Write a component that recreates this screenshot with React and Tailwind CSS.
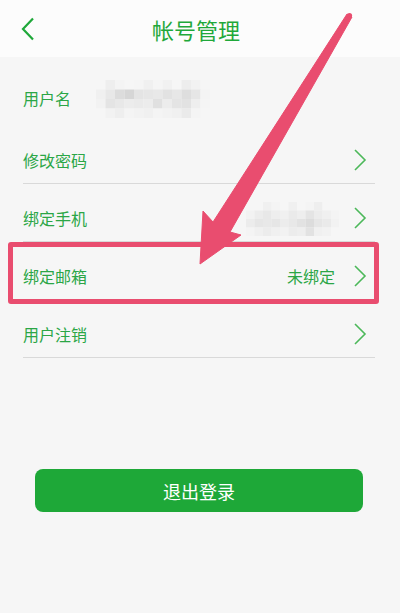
import React from "react";

const Chevron = () => (
  <svg width="14" height="22" viewBox="0 0 14 22" className="shrink-0">
    <path d="M2 1 L12 11 L2 21" fill="none" stroke="#4cb85a" strokeWidth="1.6" />
  </svg>
);

const Pixel = ({ cells, cols, size }) => (
  <svg width={cols * size} height={(cells.length / cols) * size} className="block">
    {cells.map((c, i) => (
      <rect
        key={i}
        x={(i % cols) * size}
        y={Math.floor(i / cols) * size}
        width={size}
        height={size}
        fill={`rgb(${c},${c},${c})`}
      />
    ))}
  </svg>
);

const nameCells = [
  246, 238, 244, 246, 245, 240, 245, 241, 246, 237, 242, 246,
  240, 232, 220, 214, 228, 230, 232, 226, 231, 222, 230, 244,
  242, 228, 232, 236, 234, 236, 224, 236, 228, 226, 238, 245,
  246, 242, 238, 244, 242, 240, 244, 242, 240, 234, 244, 246,
];
const phoneCells = [
  246, 246, 240, 244, 246, 240, 246, 244, 238, 246, 246,
  242, 236, 232, 238, 240, 234, 238, 228, 236, 240, 244,
  236, 230, 232, 230, 236, 232, 226, 220, 230, 234, 242,
  244, 240, 236, 240, 242, 236, 238, 226, 240, 242, 246,
];

const Row = ({ label, right, children, divider = true, mt }) => (
  <div className={`ml-[23px] mr-[25px] ${mt}`}>
    <div className="flex h-[51px] items-center pt-[5px] pr-[8px]">
      <span className="text-[16px] leading-[20px] text-[#2ba646]">{label}</span>
      <div className="flex-1">{children}</div>
      {right && (
        <span className="mr-[18px] text-[16px] leading-[20px] text-[#2ba646]">{right}</span>
      )}
      <Chevron />
    </div>
    <div className={`h-px ${divider ? "bg-[#d9d9d9]" : ""}`} />
  </div>
);

export default function App() {
  return (
    <div
      className="relative h-[613px] w-[400px] overflow-hidden bg-[#f6f6f6]"
      style={{ fontFamily: '"Noto Sans CJK SC", "Noto Sans", sans-serif' }}
    >
      <div className="relative flex h-[57px] items-center justify-center bg-[#fcfcfc]">
        <svg width="14" height="24" viewBox="0 0 14 24" className="absolute left-[21px] top-[17px]">
          <path d="M12 1.5 L2 12 L12 22.5" fill="none" stroke="#1fa83a" strokeWidth="2.2" />
        </svg>
        <span className="mr-[8px] text-[22px] leading-[28px] text-[#1fa83a]">帐号管理</span>
      </div>

      <div className="mx-[23px] mt-[13px] flex h-[51px] items-center pt-[5px]">
        <span className="text-[16px] leading-[20px] text-[#2ba646]">用户名</span>
        <div className="ml-[25px] mt-[2px]">
          <Pixel cells={nameCells} cols={12} size={9.5} />
        </div>
      </div>

      <Row label="修改密码" mt="mt-[11px]" />
      <Row label="绑定手机" mt="mt-[6px]">
        <div className="ml-auto mr-[14px] mt-[2px] w-fit">
          <Pixel cells={phoneCells} cols={11} size={8.5} />
        </div>
      </Row>
      <Row label="绑定邮箱" right="未绑定" mt="mt-[6px]" />
      <Row label="用户注销" mt="mt-[6px]" />

      <div className="ml-[35px] mr-[37px] mt-[111px] flex h-[43px] items-center justify-center rounded-[8px] bg-[#1ea838]">
        <span className="text-[18px] leading-[24px] text-white">退出登录</span>
      </div>

      {/* annotation box */}
      <div className="absolute left-[8px] top-[242px] h-[62px] w-[371px] rounded-[3px] border-[5px] border-[#e94d6f]" />

      {/* annotation arrow */}
      <svg className="absolute left-0 top-0" width="400" height="613" viewBox="0 0 400 613">
        <polygon
          points="347,14 213,222 203,211 200,264 241,235 230,232 352,17"
          fill="#e94d6f"
          strokeLinejoin="round"
          stroke="#e94d6f"
          strokeWidth="1"
        />
        <circle cx="349.5" cy="15.5" r="2.6" fill="#e94d6f" />
      </svg>
    </div>
  );
}
